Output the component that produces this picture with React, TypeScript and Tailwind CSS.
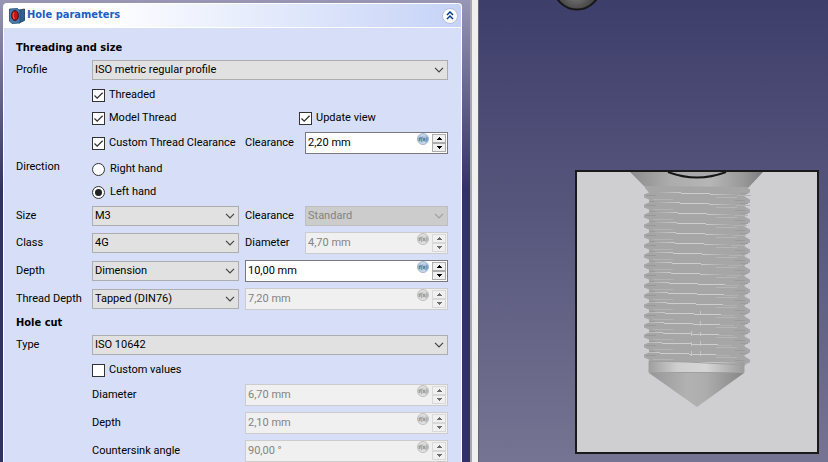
import React, { useId } from 'react';

function Chevron() {
  return (
    <svg className="pointer-events-none absolute right-1 top-1/2 -translate-y-1/2" width="10" height="6" viewBox="0 0 10 6" fill="none" stroke="currentColor" strokeWidth="1.2">
      <path d="M1 0.8 5 4.8 9 0.8" />
    </svg>
  );
}

function Select({ label, value, disabled = false }: { label: string; value: string; disabled?: boolean }) {
  return (
    <div className={`relative min-w-0 flex-1 ${disabled ? 'text-[#a0a0a0]' : 'text-[#444]'}`}>
      <select
        aria-label={label}
        disabled={disabled}
        className={`block h-5 w-full appearance-none border pl-[2px] pr-4 opacity-100 outline-none ${disabled ? 'border-[#bfbfbf] bg-[#cccccc] text-[#838383]' : 'border-[#adadad] bg-[#e1e1e1] text-black'}`}
      >
        <option>{value}</option>
      </select>
      <Chevron />
    </div>
  );
}

function FxIcon({ disabled }: { disabled: boolean }) {
  const id = useId();
  return (
    <svg width="12" height="12" viewBox="0 0 12 12" className="shrink-0">
      <defs>
        <linearGradient id={id} x1="0" y1="0" x2="0" y2="1">
          <stop offset="0" stopColor={disabled ? '#e4e4e4' : '#d3e1ef'} />
          <stop offset="0.5" stopColor={disabled ? '#cccccc' : '#9dbad8'} />
          <stop offset="1" stopColor={disabled ? '#e8e8e8' : '#d0e2f3'} />
        </linearGradient>
      </defs>
      <circle cx="6" cy="6" r="5.5" fill={`url(#${id})`} stroke={disabled ? '#b4b4b4' : '#8fa9c6'} strokeWidth="0.8" />
      <text x="6" y="8" textAnchor="middle" fontSize="6" fontStyle="italic" fontWeight="bold" fill={disabled ? '#8c8c8c' : '#3f6a96'}>f(x)</text>
    </svg>
  );
}

function SpinButton({ up, label, disabled }: { up: boolean; label: string; disabled: boolean }) {
  return (
    <button
      type="button"
      aria-label={label}
      disabled={disabled}
      className={`flex flex-1 items-center justify-center border ${disabled ? 'border-[#d8d8d8] bg-[#f0f0f0] text-[#6d6d6d]' : 'border-[#adadad] bg-[#f0f0f0] text-black'}`}
    >
      <svg width="5" height="3" viewBox="0 0 5 3" fill="currentColor" shapeRendering="crispEdges">
        <path d={up ? 'M2 0h1v1h1v1h1v1H0V2h1V1h1z' : 'M0 0h5v1H4v1H3v1H2V2H1V1H0z'} />
      </svg>
    </button>
  );
}

function Quantity({ id, value, disabled = false }: { id: string; value: string; disabled?: boolean }) {
  return (
    <div className={`flex h-[22px] min-w-0 flex-1 border ${disabled ? 'border-[#cccccc] bg-[#f0f0f0]' : 'border-[#7a7a7a] bg-white'}`}>
      <input
        id={id}
        type="text"
        defaultValue={value}
        disabled={disabled}
        className={`w-0 min-w-0 flex-1 bg-transparent pl-[2px] outline-none ${disabled ? 'text-[#838383]' : 'text-black'}`}
      />
      <FxIcon disabled={disabled} />
      <div className="m-px ml-[3px] flex w-[14px] flex-col">
        <SpinButton up label="Increase" disabled={disabled} />
        <SpinButton up={false} label="Decrease" disabled={disabled} />
      </div>
    </div>
  );
}

function Check({ label, checked = false }: { label: string; checked?: boolean }) {
  return (
    <label className="flex items-center gap-1 whitespace-nowrap">
      <span className="relative flex">
        <input type="checkbox" defaultChecked={checked} className="peer size-[13px] appearance-none border border-[#333] bg-white" />
        <svg className="pointer-events-none absolute inset-0 hidden peer-checked:block" width="13" height="13" viewBox="0 0 13 13" fill="none" stroke="#333" strokeWidth="1.3">
          <path d="M2.5 6.5 5.2 9.2 10.6 3.8" />
        </svg>
      </span>
      {label}
    </label>
  );
}

function Radio({ label, checked = false }: { label: string; checked?: boolean }) {
  return (
    <label className="flex h-[22px] items-center gap-[5px]">
      <span className="relative flex">
        <input type="radio" name="direction" defaultChecked={checked} className="peer size-[13px] appearance-none rounded-full border border-[#333] bg-white" />
        <span className="pointer-events-none absolute inset-[3px] hidden rounded-full bg-[#222] peer-checked:block" />
      </span>
      {label}
    </label>
  );
}

function Row({ label, children }: { label?: string; children: React.ReactNode }) {
  return (
    <div className="flex h-[22px] items-center">
      <span className="w-[76px] shrink-0">{label}</span>
      {children}
    </div>
  );
}

function Half({ children }: { children: React.ReactNode }) {
  return <div className="mr-[6px] flex w-[147px] shrink-0 items-center">{children}</div>;
}

function FieldLabel({ htmlFor, children }: { htmlFor?: string; children: React.ReactNode }) {
  return <label htmlFor={htmlFor} className="w-[60px] shrink-0">{children}</label>;
}

function SectionTitle({ children }: { children: React.ReactNode }) {
  return <h2 className="h-[22px] font-['DejaVu_Sans_Condensed','DejaVu_Sans',sans-serif] font-bold leading-[22px]">{children}</h2>;
}

function HoleIcon() {
  return (
    <svg width="16" height="16" viewBox="0 0 16 16">
      <path d="M10 2 15.500 1V12.500L10 15z" fill="#2f5f92" stroke="#1b3654" strokeWidth="0.8" />
      <path d="M0.500 1 8.500 0.500 11 3V15L3 15.500 0.500 13z" fill="#4a7bb0" stroke="#24476f" strokeWidth="0.8" />
      <ellipse cx="6" cy="7.500" rx="3.300" ry="4.800" fill="#c51616" stroke="#3c0808" strokeWidth="1" />
      <path d="M5 4.500C3.800 6 4 9.500 5.500 11" stroke="#f4584a" strokeWidth="1.200" fill="none" />
    </svg>
  );
}

function TaskPanel() {
  return (
    <aside className="flex w-[479px] shrink-0 bg-[linear-gradient(#9896b4_0px,#333264_190px)]">
      <div className="ml-[3px] mr-2 mt-[3px] min-w-0 flex-1">
        <header className="flex h-6 items-center justify-between rounded-t border-x border-t border-white bg-linear-to-r from-white from-20% to-[#c6d3f7] pl-[5px] pr-[3px]">
          <h1 className="flex items-center gap-[2px] font-['DejaVu_Sans_Condensed','DejaVu_Sans',sans-serif] font-bold text-[#215dc6]">
            <HoleIcon />
            Hole parameters
          </h1>
          <button type="button" aria-label="Collapse" className="flex size-4 items-center justify-center rounded-full border border-[#b5bfdd] bg-white">
            <svg width="8" height="9" viewBox="0 0 8 9" fill="none" stroke="#0a3a96" strokeWidth="1.5">
              <path d="M1 4 4 1 7 4M1 8 4 5 7 8" />
            </svg>
          </button>
        </header>
        <form className="border border-b-0 border-white bg-[#d6dff7] pl-3 pr-[13px] pt-[9px]">
          <SectionTitle>Threading and size</SectionTitle>
          <Row label="Profile"><Select label="Profile" value="ISO metric regular profile" /></Row>
          <div className="mt-[3px]">
            <Row><Check label="Threaded" checked /></Row>
          </div>
          <div className="mt-px flex flex-col gap-[3px]">
            <Row>
              <div className="w-[207px]"><Check label="Model Thread" checked /></div>
              <Check label="Update view" checked />
            </Row>
            <Row>
              <Half><Check label="Custom Thread Clearance" checked /></Half>
              <FieldLabel htmlFor="clearance">Clearance</FieldLabel>
              <Quantity id="clearance" value="2,20 mm" />
            </Row>
          </div>
          <fieldset className="mt-1 flex">
            <legend className="float-left w-[76px] leading-[18px]">Direction</legend>
            <div className="flex flex-col gap-px">
              <Radio label="Right hand" />
              <Radio label="Left hand" checked />
            </div>
          </fieldset>
          <div className="mt-[2px]">
            <Row label="Size">
              <Half><Select label="Size" value="M3" /></Half>
              <FieldLabel>Clearance</FieldLabel>
              <Select label="Clearance" value="Standard" disabled />
            </Row>
          </div>
          <div className="mt-[5px] flex flex-col gap-[6px]">
            <Row label="Class">
              <Half><Select label="Class" value="4G" /></Half>
              <FieldLabel htmlFor="diameter">Diameter</FieldLabel>
              <Quantity id="diameter" value="4,70 mm" disabled />
            </Row>
            <Row label="Depth">
              <Half><Select label="Depth" value="Dimension" /></Half>
              <Quantity id="depth" value="10,00 mm" />
            </Row>
            <Row label="Thread Depth">
              <Half><Select label="Thread Depth" value="Tapped (DIN76)" /></Half>
              <Quantity id="thread-depth" value="7,20 mm" disabled />
            </Row>
          </div>
          <div className="mt-[2px]">
            <SectionTitle>Hole cut</SectionTitle>
            <Row label="Type"><Select label="Type" value="ISO 10642" /></Row>
          </div>
          <div className="mt-[3px]">
            <Row><Check label="Custom values" /></Row>
          </div>
          <div className="mt-[3px] flex flex-col gap-[6px]">
            <Row>
              <Half><label htmlFor="cut-diameter">Diameter</label></Half>
              <Quantity id="cut-diameter" value="6,70 mm" disabled />
            </Row>
            <Row>
              <Half><label htmlFor="cut-depth">Depth</label></Half>
              <Quantity id="cut-depth" value="2,10 mm" disabled />
            </Row>
            <Row>
              <Half><label htmlFor="cut-angle">Countersink angle</label></Half>
              <Quantity id="cut-angle" value="90,00 °" disabled />
            </Row>
          </div>
        </form>
      </div>
      <div className="w-[9px] shrink-0 border-l-2 border-r border-l-[#a9a9ad] border-r-[#65657a] bg-[#f0f0f0]" />
    </aside>
  );
}

const turns = Array.from({ length: 17 }, (_, i) => i);

function threadOutline() {
  let d = 'M68 14 171 15';
  for (let i = 0; i < 18; i++) {
    const y = 15.5 + i * 10;
    d += `L171 ${y + 1} 173 ${y + 2} 173 ${y + 5} 170 ${y + 6} 167 ${y + 8.5}`;
  }
  d += 'L167 191 72 191';
  for (let i = 16; i >= 0; i--) {
    const y = 20.5 + i * 10;
    d += `L72 ${y + 7} 67 ${y + 5} 67 ${y + 2} 72 ${y}`;
  }
  return d + 'L68 16z';
}

function Screw() {
  return (
    <svg width="240" height="280" viewBox="0 0 240 280">
      <defs>
        <linearGradient id="head" x1="0" x2="1">
          <stop offset="0" stopColor="#8c8c8c" />
          <stop offset="0.3" stopColor="#acacac" />
          <stop offset="0.6" stopColor="#b6b6b6" />
          <stop offset="0.85" stopColor="#999" />
          <stop offset="1" stopColor="#7c7c7c" />
        </linearGradient>
        <linearGradient id="collar" x1="0" x2="1">
          <stop offset="0" stopColor="#9f9f9f" />
          <stop offset="0.3" stopColor="#cfcfcf" />
          <stop offset="0.6" stopColor="#d6d6d6" />
          <stop offset="1" stopColor="#9c9c9c" />
        </linearGradient>
        <linearGradient id="tip" x1="0" x2="1">
          <stop offset="0" stopColor="#969696" />
          <stop offset="0.4" stopColor="#b2b2b2" />
          <stop offset="0.6" stopColor="#adadad" />
          <stop offset="1" stopColor="#868686" />
        </linearGradient>
        <linearGradient id="fadeIn" x1="0" x2="1">
          <stop offset="0" stopColor="#ccc" stopOpacity="0" />
          <stop offset="1" stopColor="#ccc" />
        </linearGradient>
        <linearGradient id="fadeOut" x1="0" x2="1">
          <stop offset="0" stopColor="#ccc" />
          <stop offset="1" stopColor="#ccc" stopOpacity="0" />
        </linearGradient>
      </defs>
      <path d="M53 0H186L171 16H69z" fill="url(#head)" />
      <path d="M91 0Q120 11 149 0" fill="#a9a9ab" stroke="#151515" strokeWidth="2" />
      <path d={threadOutline()} fill="#a6a6a6" />
      <g shapeRendering="crispEdges">
        {turns.map((i) => {
          const y = 20 + i * 10;
          const b = 104 - i * 1.3;
          return (
            <g key={i}>
              <rect x={b - 24} y={y} width="24" height="1" fill="url(#fadeIn)" />
              <rect x={b} y={y + 1} width="29" height="1" fill="#cdcdcd" />
              <rect x={b + 29} y={y + 2} width="27" height="1" fill={i > 8 ? '#cdcdcd' : 'url(#fadeOut)'} />
              <rect x={b + 56} y={y + 3} width="14" height="1" fill="#b2b2b2" />
              <rect x="76" y={y + 7} width="20" height="1" fill="#b3b3b3" />
              <rect x="139" y={y + 5} width="21" height="1" fill="#b5b5b5" />
              <rect x="69" y={y + 3} width="10" height="1" fill="#989898" />
              <rect x="73" y={y + 9} width="5" height="1" fill="#9a9a9a" />
              <rect x="158" y={y + 8} width="10" height="1" fill="#9a9a9a" />
              <rect x="163" y={y + 1} width="8" height="1" fill="#9c9c9c" />
            </g>
          );
        })}
        <path d="M123.500 139v3M123.500 149v5M123.500 160v4M123.500 169v5M123.500 179v5M114.500 159v5M114.500 170v4M114.500 179v5" stroke="#c6c6c6" strokeWidth="1.500" />
      </g>
      <path d="M72 190H167V200H72z" fill="url(#collar)" />
      <path d="M72 189V200.500H167V193L110 190z" fill="none" stroke="#a0a0a0" />
      <path d="M72 201H167L120 235z" fill="url(#tip)" />
    </svg>
  );
}

function Viewport() {
  return (
    <main className="relative min-w-0 flex-1 overflow-hidden bg-linear-to-b from-[#3e3e6b] to-[#757492]">
      <svg className="absolute left-[73px] top-0" width="50" height="12" viewBox="0 0 50 12">
        <defs>
          <radialGradient id="ball" gradientUnits="userSpaceOnUse" cx="24" cy="-8" r="19">
            <stop offset="0" stopColor="#858585" />
            <stop offset="1" stopColor="#444" />
          </radialGradient>
        </defs>
        <circle cx="25" cy="-14" r="23.500" fill="url(#ball)" stroke="#161616" strokeWidth="2" />
      </svg>
      <div className="absolute bottom-2 right-[9px] border-2 border-[#1a1a1a] bg-[#cfcfd1]">
        <Screw />
      </div>
    </main>
  );
}

export default function App() {
  return (
    <div className="flex h-screen overflow-hidden font-[Roboto,sans-serif] text-[11px] text-black">
      <TaskPanel />
      <Viewport />
    </div>
  );
}
